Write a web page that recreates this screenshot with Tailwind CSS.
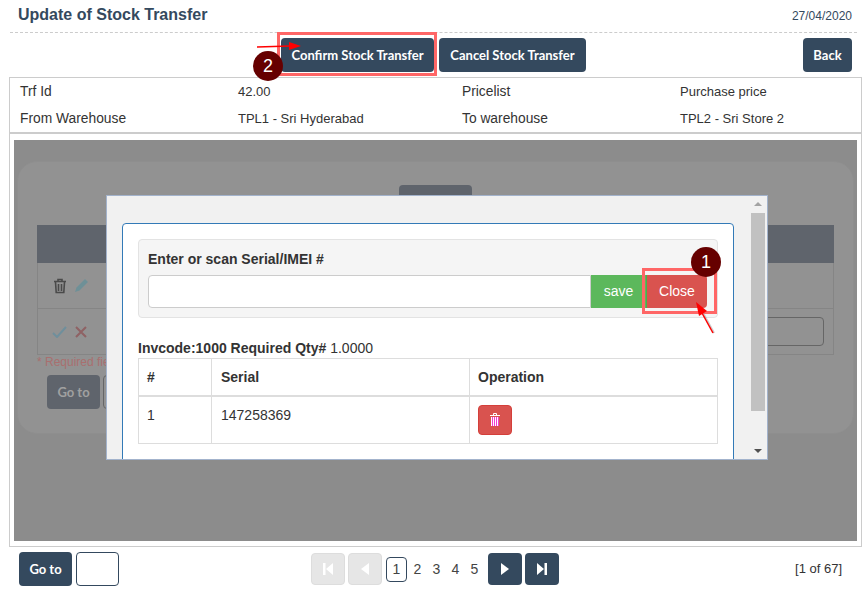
<!DOCTYPE html>
<html lang="en">
<head>
  <meta charset="UTF-8">
  <title>Update of Stock Transfer</title>
  <script src="https://cdn.jsdelivr.net/npm/@tailwindcss/browser@4"></script>
</head>
<body class="bg-white w-[867px] h-[589px] overflow-hidden relative font-['Liberation_Sans',sans-serif] text-[13px] text-[#333]">

  <!-- Header -->
  <div class="mx-[10px] h-[33px] border-b border-dashed border-[#ccc] flex items-center justify-between pl-[8px] pr-[5px] pb-[2px]">
    <h1 class="text-[16px] font-bold text-[#34495e]">Update of Stock Transfer</h1>
    <span class="text-[12px] text-[#34495e] pt-[1px]">27/04/2020</span>
  </div>

  <!-- Toolbar -->
  <div class="h-[44px] pt-[5px] pl-[281px] pr-[15px] flex items-start font-['Lato',sans-serif] font-bold text-[13px] text-white">
    <button class="h-[34px] w-[153px] pt-[2px] bg-[#34495e] rounded-[4px] shrink-0">Confirm Stock Transfer</button>
    <button class="h-[34px] w-[147px] pt-[2px] ml-[5px] bg-[#34495e] rounded-[4px] shrink-0">Cancel Stock Transfer</button>
    <button class="h-[34px] w-[49px] pt-[2px] ml-auto bg-[#34495e] rounded-[4px] shrink-0">Back</button>
  </div>

  <!-- Outer box -->
  <div class="mx-[9px] w-[853px] h-[470px] border border-[#ccc] flex flex-col">
    <div class="h-[56px] shrink-0 border-b-[2px] border-[#ccc] grid grid-cols-[218px_224px_218px_1fr] grid-rows-[27px_27px] pl-[10px] items-center text-[13px]">
      <span class="pt-[2px] text-[13.800px] text-[#333]">Trf Id</span><span>42.00</span><span class="pt-[2px] text-[13.800px] text-[#333]">Pricelist</span><span>Purchase price</span>
      <span class="pt-[2px] text-[13.800px] text-[#333]">From Warehouse</span><span>TPL1 - Sri Hyderabad</span><span class="pt-[2px] text-[13.800px] text-[#333]">To warehouse</span><span>TPL2 - Sri Store 2</span>
    </div>

    <!-- Dimmed page behind the modal -->
    <div class="mx-[4px] mt-[6px] h-[401px] bg-[#8c8c8c] pt-[21px] px-[3px]">
      <div class="h-[273px] bg-[#929292] border border-[#8e8e8e] rounded-[20px] flex flex-col pt-[23px] px-[19px]">
        <div class="w-[73px] h-[34px] bg-[#5f646c] rounded-[4px] shrink-0 ml-[362px]"></div>
        <div class="mt-[6px] h-[38px] bg-[#5f646c] shrink-0"></div>
        <div class="h-[46px] border-x border-b border-[#858585] flex items-center pl-[15px] gap-[7px]">
          <svg width="14" height="16" viewBox="0 0 14 16" fill="none" stroke="#4a4a4a" stroke-width="1.6"><path d="M1 3.500h12M5 3V1.500h4V3M2.500 4l.7 10.500h7.600L11.500 4M5.500 6v7M8.500 6v7"/></svg>
          <svg width="15" height="15" viewBox="0 0 15 15"><path d="M11 1l3 3-8.500 8.500L1 14l1.500-4.500z" fill="#6e9097"/></svg>
        </div>
        <div class="h-[46px] border-x border-b border-[#858585] flex items-center justify-between pl-[14px] pr-[9px]">
          <div class="flex items-center gap-[8px]">
            <svg width="15" height="12" viewBox="0 0 15 12" fill="none" stroke="#6f8f9c" stroke-width="2"><path d="M1 7l4 4 9-10"/></svg>
            <svg width="12" height="12" viewBox="0 0 12 12" fill="none" stroke="#8f6264" stroke-width="2"><path d="M1 1l10 10M11 1L1 11"/></svg>
          </div>
          <div class="w-[70px] h-[29px] border border-[#666] rounded-[4px]"></div>
        </div>
        <p class="text-[12px] leading-[14px] text-[#a96f6f]">* Required fields</p>
        <div class="mt-[6px] ml-[10px] flex gap-[3px]">
          <div class="w-[53px] h-[34px] pt-[1px] bg-[#5f646c] rounded-[4px] flex items-center justify-center font-['Lato',sans-serif] font-bold text-[#a0a0a0]">Go to</div>
          <div class="w-[43px] h-[34px] border border-[#666] rounded-[4px]"></div>
        </div>
      </div>
    </div>
  </div>

  <!-- Footer pagination -->
  <div class="relative h-[42px] pl-[19px] pr-[25px] pt-[5px] flex items-start">
    <button class="h-[34px] w-[53px] pt-[2px] bg-[#34495e] rounded-[4px] text-white font-['Lato',sans-serif] font-bold text-[13px] shrink-0">Go to</button>
    <div class="h-[34px] w-[43px] ml-[4px] border border-[#34495e] rounded-[4px] shrink-0"></div>
    <div class="ml-[192px] flex items-center h-[34px] text-[14px] text-[#444]">
      <span class="w-[34px] h-[32px] bg-[#e6e6e6] border border-[#ddd] rounded-[4px] flex items-center justify-center">
        <svg width="12" height="14" viewBox="0 0 12 14" fill="#fff"><path d="M1 1h2.500v12H1zM11 1v12L4 7z"/></svg>
      </span>
      <span class="w-[34px] h-[32px] ml-[3px] bg-[#e6e6e6] border border-[#ddd] rounded-[4px] flex items-center justify-center">
        <svg width="10" height="14" viewBox="0 0 10 14" fill="#fff"><path d="M9 1v12L1 7z"/></svg>
      </span>
      <span class="w-[21px] h-[25px] ml-[4px] border border-[#34495e] rounded-[4px] flex items-center justify-center">1</span>
      <span class="w-[19px] ml-[1px] text-center">2</span>
      <span class="w-[19px] text-center">3</span>
      <span class="w-[19px] text-center">4</span>
      <span class="w-[19px] text-center">5</span>
      <span class="w-[34px] h-[32px] ml-[4px] bg-[#34495e] rounded-[4px] flex items-center justify-center">
        <svg width="10" height="14" viewBox="0 0 10 14" fill="#fff"><path d="M1 1v12l8-6z"/></svg>
      </span>
      <span class="w-[34px] h-[32px] ml-[3px] bg-[#34495e] rounded-[4px] flex items-center justify-center">
        <svg width="12" height="14" viewBox="0 0 12 14" fill="#fff"><path d="M1 1v12l7-6zM8.500 1H11v12H8.500z"/></svg>
      </span>
    </div>
    <span class="ml-auto text-[13px] leading-[34px]">[1 of 67]</span>
  </div>

  <!-- Modal -->
  <div class="absolute left-[106px] top-[195px] w-[662px] h-[265px] bg-[#f1f1f1] border border-[#a3b3cc] flex overflow-hidden">
    <div class="w-[644px] shrink-0 pl-[15px] pt-[27px]">
      <div class="w-[612px] h-[300px] bg-white border border-[#337ab7] rounded-[4px] pl-[15px] pt-[15px]">
        <div class="w-[580px] h-[79px] bg-[#f5f5f5] border border-[#e3e3e3] rounded-[4px] pl-[9px] pt-[10px]">
          <label class="block text-[14px] font-bold leading-[18px] text-[#333]">Enter or scan Serial/IMEI #</label>
          <div class="flex mt-[7px] h-[33px]">
            <div class="w-[443px] bg-white border border-[#ccc] rounded-l-[4px]"></div>
            <div class="w-[55px] bg-[#5cb85c] text-white text-[14px] flex items-center justify-center">save</div>
            <div class="w-[61px] bg-[#d9534f] text-white text-[14px] flex items-center justify-center rounded-r-[4px] border-l border-[#4cae4c]">Close</div>
          </div>
        </div>
        <p class="mt-[21px] h-[18px] text-[14px] leading-[18px] font-bold">Invcode:1000 Required Qty# <span class="font-normal">1.0000</span></p>
        <table class="w-[580px] mt-[1px] border-collapse text-[14px] table-fixed">
          <tr class="h-[37px]">
            <th class="w-[73px] border border-[#ddd] border-b-[2px] text-left pl-[8px] pt-[2px] font-bold">#</th>
            <th class="w-[258px] border border-[#ddd] border-b-[2px] text-left pl-[9px] pt-[2px] font-bold">Serial</th>
            <th class="border border-[#ddd] border-b-[2px] text-left pl-[8px] pt-[2px] font-bold">Operation</th>
          </tr>
          <tr class="h-[48px]">
            <td class="border border-[#ddd] pl-[8px] align-top pt-[8px]">1</td>
            <td class="border border-[#ddd] pl-[9px] align-top pt-[8px]">147258369</td>
            <td class="border border-[#ddd] pl-[8px] align-top pt-[8px]">
              <div class="w-[34px] h-[30px] bg-[#d9534f] border border-[#d43f3a] rounded-[4px] flex items-center justify-center">
                <svg width="12" height="14" viewBox="0 0 12 14" fill="none">
                  <path d="M1 2.500h10M4.500 2.500v-2h3v2" stroke="#fff"/>
                  <path d="M2 4h8v9H2z" fill="#fff"/>
                  <path d="M3.500 4v9M5.500 4v9M7.500 4v9M9.500 4v9" stroke="#f23fd0"/>
                </svg>
              </div>
            </td>
          </tr>
        </table>
      </div>
    </div>
    <!-- Scrollbar -->
    <div class="w-[14px] flex flex-col items-center pt-[6px] relative bg-[#f1f1f1]">
      <div class="w-0 h-0 border-x-[4px] border-x-transparent border-b-[4px] border-b-[#a3a3a3]"></div>
      <div class="w-full h-[198px] mt-[7px] bg-[#c1c1c1]"></div>
      <div class="absolute bottom-[6px] w-0 h-0 border-x-[4px] border-x-transparent border-t-[4px] border-t-[#505050]"></div>
    </div>
  </div>

  <!-- Annotation 1 -->
  <div class="absolute left-[642px] top-[268px] w-[75px] h-[46px] border-[3px] border-[#ff6666]"></div>
  <div class="absolute left-[691px] top-[247px] w-[30px] h-[30px] rounded-full bg-[#660000] text-white text-[18px] flex items-center justify-center">1</div>
  <svg class="absolute left-[690px] top-[298px]" width="30" height="40" viewBox="0 0 30 40" fill="none">
    <path d="M24 35L13 15" stroke="#999" stroke-width="2" opacity="0.5"/>
    <path d="M23 35L12 15" stroke="#f00" stroke-width="1.500"/>
    <path d="M6 4l11 9-8 5z" fill="#f00"/>
  </svg>

  <!-- Annotation 2 -->
  <div class="absolute left-[277px] top-[32px] w-[160px] h-[44px] border-[3px] border-[#ff6666]"></div>
  <div class="absolute left-[253px] top-[51px] w-[30px] h-[30px] rounded-full bg-[#660000] text-white text-[18px] flex items-center justify-center">2</div>
  <svg class="absolute left-[256px] top-[40px]" width="46" height="12" viewBox="0 0 46 12" fill="none">
    <path d="M1 7L34 6" stroke="#f00" stroke-width="1.500"/>
    <path d="M45 6l-12-4v8z" fill="#f00"/>
  </svg>
</body>
</html>
